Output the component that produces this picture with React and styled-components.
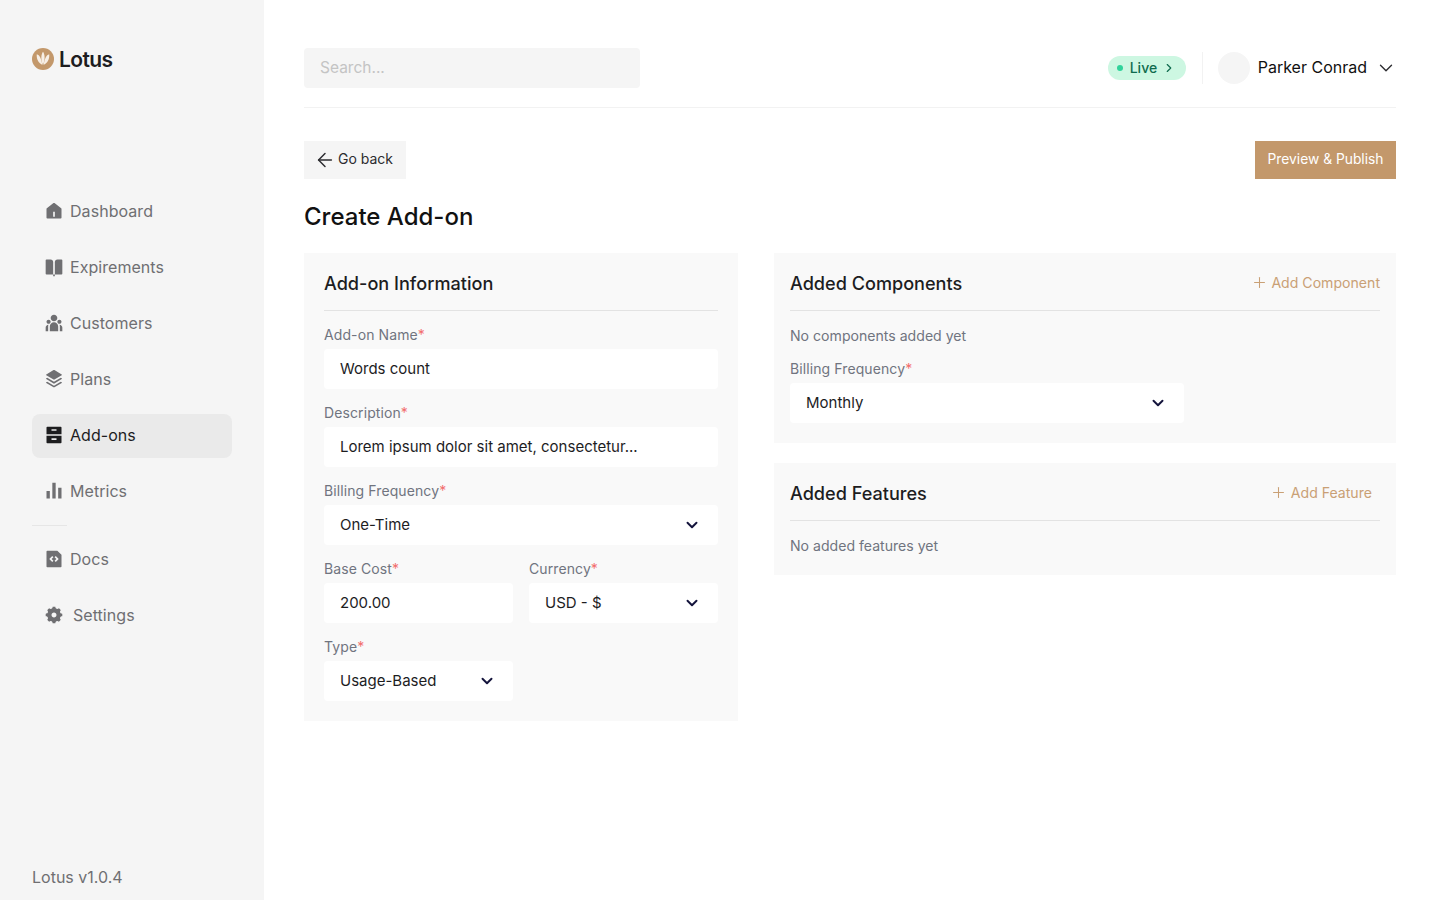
import React from 'react';
import styled, { createGlobalStyle } from 'styled-components';
import {
  RiHome5Fill,
  RiBookOpenFill,
  RiTeamFill,
  RiStackFill,
  RiArchiveDrawerFill,
  RiBarChartFill,
  RiFileCodeFill,
  RiSettings5Fill,
} from 'react-icons/ri';
import { FiChevronDown, FiChevronRight, FiPlus, FiArrowLeft } from 'react-icons/fi';

const GlobalStyle = createGlobalStyle`
  * { box-sizing: border-box; }
  html, body { margin: 0; padding: 0; background: #fff; }
  body { font-family: Inter, "Liberation Sans", sans-serif; color: #1d1d1f; }
`;

const Layout = styled.div`
  display: flex;
  width: 100%;
  min-height: 900px;
`;

const Sidebar = styled.aside`
  width: 264px;
  height: 900px;
  flex-shrink: 0;
  background: #f5f5f5;
  padding: 0 32px;
  display: flex;
  flex-direction: column;
`;

const Brand = styled.div`
  height: 118px;
  display: flex;
  align-items: center;
  gap: 5px;
`;

const BrandName = styled.span`
  font-size: 21px;
  font-weight: 600;
  letter-spacing: -0.6px;
  color: #1d1d1f;
`;

const Nav = styled.nav`
  margin-top: 72px;
  display: flex;
  flex-direction: column;
  gap: 12px;
`;

const NavItem = styled.a`
  height: 44px;
  display: flex;
  align-items: center;
  gap: ${(p) => p.$gap || 6}px;
  padding: 0 0 2px 12px;
  border-radius: 8px;
  font-size: 16px;
  line-height: 20px;
  letter-spacing: 0.05px;
  background: ${(p) => (p.$active ? '#eaeaea' : 'transparent')};
  color: ${(p) => (p.$active ? '#1d1d1f' : '#6f6f72')};

  svg {
    width: 20px;
    height: 20px;
    flex-shrink: 0;
  }
`;

const NavDivider = styled.div`
  width: 35px;
  height: 1px;
  background: #e6e6e6;
  margin-top: -1px;
`;

const Version = styled.div`
  margin-top: auto;
  padding-bottom: 13px;
  font-size: 16px;
  line-height: 20px;
  color: #6f6f72;
`;

const Main = styled.main`
  flex: 1;
  padding: 0 44px 0 40px;
`;

const TopBar = styled.header`
  height: 108px;
  padding: 48px 0 19px;
  display: flex;
  align-items: flex-start;
  justify-content: space-between;
  border-bottom: 1px solid #f2f2f2;
`;

const Search = styled.div`
  width: 336px;
  height: 40px;
  padding: 0 16px 2px;
  display: flex;
  align-items: center;
  background: #f5f5f5;
  border-radius: 4px;
  font-size: 15.5px;
  color: #c4c4c4;
`;

const UserArea = styled.div`
  display: flex;
  align-items: center;
  height: 40px;
`;

const LiveBadge = styled.div`
  width: 78px;
  height: 24px;
  border-radius: 12px;
  background: #cdf7e2;
  color: #0f6b4e;
  font-size: 14px;
  font-weight: 500;
  display: flex;
  align-items: center;
  padding: 0 0 1px 9px;
  svg {
    width: 14px;
    height: 14px;
    margin-left: 5px;
  }
`;

const LiveDot = styled.span`
  width: 6px;
  height: 6px;
  border-radius: 50%;
  background: #2fd39a;
  margin: 1px 7px 0 0;
`;

const VLine = styled.div`
  width: 1px;
  height: 32px;
  background: #f2f2f2;
  margin: 0 15px 0 16px;
`;

const Avatar = styled.div`
  width: 32px;
  height: 32px;
  border-radius: 50%;
  background: #f5f5f5;
  margin-right: 8px;
`;

const UserName = styled.span`
  font-size: 16px;
  color: #111;
  margin-top: -2px;
`;

const UserCaret = styled(FiChevronDown)`
  width: 22px;
  height: 22px;
  margin: 0 -1px 0 8px;
  color: #2c2c30;
  stroke-width: 1.5;
`;

const ActionRow = styled.div`
  margin-top: 33px;
  display: flex;
  justify-content: space-between;
`;

const BackButton = styled.button`
  width: 102px;
  height: 38px;
  border: 0;
  padding: 0 0 4px 10px;
  background: #f5f5f5;
  display: flex;
  align-items: center;
  gap: 2px;
  font: inherit;
  font-size: 14px;
  color: #2c2c30;
  svg {
    width: 22px;
    height: 22px;
    stroke-width: 1.6;
    margin-top: 4px;
  }
`;

const PublishButton = styled.button`
  width: 141px;
  height: 38px;
  border: 0;
  padding: 0 0 2px;
  background: #c3986b;
  color: #fff;
  font: inherit;
  font-size: 13.8px;
`;

const PageTitle = styled.h1`
  margin: 22px 0 20px;
  font-size: 24px;
  line-height: 32px;
  font-weight: 500;
  color: #111;
`;

const Columns = styled.div`
  display: flex;
  align-items: flex-start;
  gap: 36px;
`;

const Card = styled.section`
  background: #f9f9f9;
  padding: 16px ${(p) => p.$pad}px ${(p) => p.$bottom || p.$pad}px;
  width: ${(p) => p.$width}px;
`;

const RightColumn = styled.div`
  display: flex;
  flex-direction: column;
  gap: 20px;
`;

const CardHead = styled.div`
  height: 42px;
  padding: 0 0 14px;
  display: flex;
  align-items: center;
  justify-content: space-between;
  border-bottom: 1px solid #e3e3e3;
`;

const CardTitle = styled.h2`
  margin: 0;
  font-size: 18.1px;
  line-height: 28px;
  font-weight: 500;
  color: #1d1d1f;
`;

const AddLink = styled.a`
  display: flex;
  align-items: center;
  gap: 3.5px;
  font-size: 14.1px;
  color: #c9a075;
  margin-right: ${(p) => p.$inset || 0}px;
  svg {
    width: 17px;
    height: 17px;
    stroke-width: 1.5;
  }
`;

const FormGrid = styled.div`
  display: grid;
  grid-template-columns: 1fr 1fr;
  column-gap: 16px;
  row-gap: 14px;
  padding-top: 14px;
`;

const Field = styled.div`
  grid-column: ${(p) => (p.$wide ? '1 / -1' : 'auto')};
  display: flex;
  flex-direction: column;
  gap: 4px;
`;

const Label = styled.label`
  font-size: 14px;
  line-height: 20px;
  letter-spacing: 0.1px;
  color: #70747f;
`;

const Req = styled.span`
  color: #f26d6d;
`;

const Box = styled.div`
  height: 40px;
  padding: 0 16px 2px;
  display: flex;
  align-items: center;
  justify-content: space-between;
  background: #fff;
  border-radius: 4px;
  font-size: 15px;
  color: #1d1d1f;
  svg {
    width: 18px;
    height: 18px;
    color: #14143c;
    stroke-width: 2.6;
    margin: 2px 1px 0 0;
  }
`;

const Empty = styled.p`
  margin: 0;
  padding-top: 15px;
  font-size: 14.1px;
  line-height: 20px;
  color: #70747f;
`;

const ComponentField = styled(Field)`
  width: 394px;
  margin-top: 13px;
`;

const LotusMark = () => (
  <svg width="22" height="22" viewBox="0 0 22 22">
    <circle cx="11" cy="11" r="11" fill="#c3986b" />
    <path d="M11 3.8c1.9 2.6 2.4 7.6 0 13.4-2.4-5.8-1.9-10.8 0-13.4z" fill="#f7efe6" />
    <path d="M4.8 6.2c2.8.8 4.6 4.2 5.4 10.6C6.4 15 4.3 10.8 4.8 6.2z" fill="#f7efe6" />
    <path d="M17.2 6.2c-2.8.8-4.6 4.2-5.4 10.6 3.8-1.8 5.9-6 5.4-10.6z" fill="#f7efe6" />
  </svg>
);

const navTop = [
  { label: 'Dashboard', Icon: RiHome5Fill },
  { label: 'Expirements', Icon: RiBookOpenFill },
  { label: 'Customers', Icon: RiTeamFill },
  { label: 'Plans', Icon: RiStackFill },
  { label: 'Add-ons', Icon: RiArchiveDrawerFill, active: true },
  { label: 'Metrics', Icon: RiBarChartFill },
];

const FieldLabel = ({ children }) => (
  <Label>
    {children}
    <Req>*</Req>
  </Label>
);

const App = () => {
  return (
    <>
      <GlobalStyle />
      <Layout>
        <Sidebar>
          <Brand>
            <LotusMark />
            <BrandName>Lotus</BrandName>
          </Brand>
          <Nav>
            {navTop.map(({ label, Icon, active }) => (
              <NavItem key={label} $active={active}>
                <Icon />
                {label}
              </NavItem>
            ))}
            <NavDivider />
            <NavItem>
              <RiFileCodeFill />
              Docs
            </NavItem>
            <NavItem $gap={9}>
              <RiSettings5Fill />
              Settings
            </NavItem>
          </Nav>
          <Version>Lotus v1.0.4</Version>
        </Sidebar>
        <Main>
          <TopBar>
            <Search>Search...</Search>
            <UserArea>
              <LiveBadge>
                <LiveDot />
                Live
                <FiChevronRight />
              </LiveBadge>
              <VLine />
              <Avatar />
              <UserName>Parker Conrad</UserName>
              <UserCaret />
            </UserArea>
          </TopBar>
          <ActionRow>
            <BackButton>
              <FiArrowLeft />
              Go back
            </BackButton>
            <PublishButton>Preview &amp; Publish</PublishButton>
          </ActionRow>
          <PageTitle>Create Add-on</PageTitle>
          <Columns>
            <Card $pad={20} $width={434}>
              <CardHead>
                <CardTitle>Add-on Information</CardTitle>
              </CardHead>
              <FormGrid>
                <Field $wide>
                  <FieldLabel>Add-on Name</FieldLabel>
                  <Box>Words count</Box>
                </Field>
                <Field $wide>
                  <FieldLabel>Description</FieldLabel>
                  <Box>Lorem ipsum dolor sit amet, consectetur...</Box>
                </Field>
                <Field $wide>
                  <FieldLabel>Billing Frequency</FieldLabel>
                  <Box>
                    One-Time
                    <FiChevronDown />
                  </Box>
                </Field>
                <Field>
                  <FieldLabel>Base Cost</FieldLabel>
                  <Box>200.00</Box>
                </Field>
                <Field>
                  <FieldLabel>Currency</FieldLabel>
                  <Box>
                    USD - $
                    <FiChevronDown />
                  </Box>
                </Field>
                <Field>
                  <FieldLabel>Type</FieldLabel>
                  <Box>
                    Usage-Based
                    <FiChevronDown />
                  </Box>
                </Field>
              </FormGrid>
            </Card>
            <RightColumn>
              <Card $pad={16} $bottom={20} $width={622}>
                <CardHead>
                  <CardTitle>Added Components</CardTitle>
                  <AddLink>
                    <FiPlus />
                    Add Component
                  </AddLink>
                </CardHead>
                <Empty>No components added yet</Empty>
                <ComponentField>
                  <FieldLabel>Billing Frequency</FieldLabel>
                  <Box>
                    Monthly
                    <FiChevronDown />
                  </Box>
                </ComponentField>
              </Card>
              <Card $pad={16} $bottom={19} $width={622}>
                <CardHead>
                  <CardTitle>Added Features</CardTitle>
                  <AddLink $inset={8}>
                    <FiPlus />
                    Add Feature
                  </AddLink>
                </CardHead>
                <Empty>No added features yet</Empty>
              </Card>
            </RightColumn>
          </Columns>
        </Main>
      </Layout>
    </>
  );
};

export default App;
